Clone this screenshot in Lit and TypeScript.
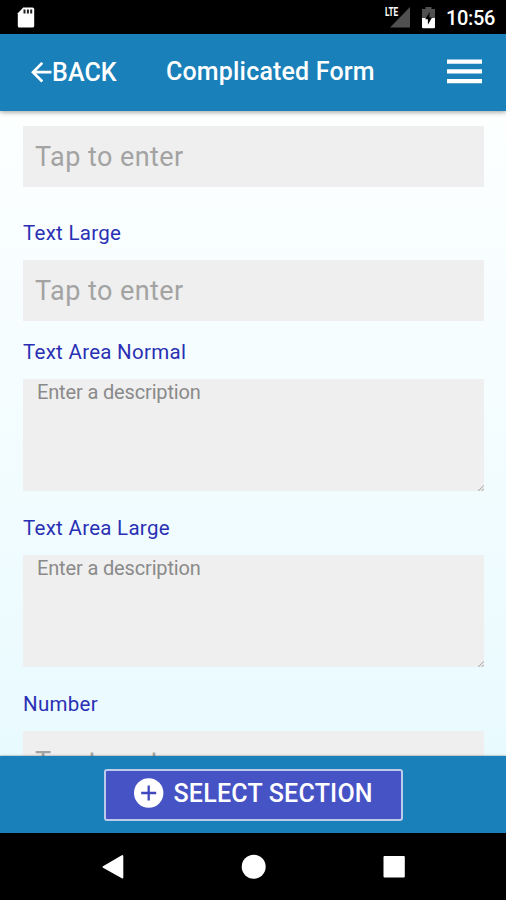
import { LitElement, html, css } from "lit";
import { customElement, property } from "lit/decorators.js";

@customElement("status-bar")
class StatusBar extends LitElement {
  static styles = css`
    :host { display: flex; align-items: flex-start; height: 34px; background: #000; color: #fff; box-sizing: border-box; }
    svg { display: block; flex: none; }
    .sd { margin: 7px 0 0 17px; }
    .spacer { flex: 1; }
    .lte { font: 700 13px/12px Roboto, sans-serif; margin-top: 6px; width: 14px; white-space: nowrap; transform: scaleX(0.63); transform-origin: 0 0; }
    .signal { margin-top: 7px; margin-right: 11px; margin-left: -9px; }
    .battery { margin-top: 7px; margin-right: 10px; }
    .clock { font: 500 20px/24px Roboto, sans-serif; margin-top: 6px; width: 60px; white-space: nowrap; letter-spacing: -0.35px; }
  `;
  render() {
    return html`
      <svg class="sd" width="18" height="21" viewBox="0 0 18 21">
        <path fill="#fff" d="M6.2 0.5H15.5Q17.2 0.5 17.2 2.2V19Q17.2 20.6 15.5 20.6H2.3Q0.8 20.6 0.8 19V6.2Z" />
        <path fill="#222" d="M6.5 2.5h2v4h-2zM9.9 2.5h2v4h-2zM13.2 2.5h2v4h-2z" />
      </svg>
      <div class="spacer"></div>
      <span class="lte">LTE</span>
      <svg class="signal" width="20" height="21" viewBox="0 0 20 21"><path fill="#505050" d="M20 0V20.5H0Z" /></svg>
      <svg class="battery" width="15" height="22" viewBox="0 0 15 22">
        <path fill="#505050" d="M4.5 0H10.5V2H14V12H1V2H4.5Z" />
        <path fill="#fff" d="M1 11H14V20Q14 21.2 12.8 21.2H2.2Q1 21.2 1 20Z" />
        <path fill="#000" d="M8.8 4.8L4.2 12.3H6.9V17.8L11 10.4H8.2Z" />
      </svg>
      <span class="clock">10:56</span>
    `;
  }
}

@customElement("top-bar")
class TopBar extends LitElement {
  static styles = css`
    :host { display: flex; align-items: center; height: 77px; background: #1a80b9; color: #fff; box-sizing: border-box;
      box-shadow: 0 1px 5px rgba(0, 0, 0, 0.4); position: relative; z-index: 1; padding: 0 24px 0 31px; }
    svg { display: block; flex: none; }
    .back { display: flex; align-items: center; font: 500 25px/30px Roboto, sans-serif; width: 135px; white-space: nowrap; letter-spacing: 0.1px; }
    .title { font: 500 25px/30px Roboto, sans-serif; flex: 1; white-space: nowrap; margin-top: -2px; letter-spacing: 0.18px; }
    .menu { margin-top: -3px; }
  `;
  render() {
    return html`
      <div class="back">
        <svg width="21" height="22" viewBox="0 0 21 22">
          <path fill="none" stroke="#fff" stroke-width="2.7" d="M20.5 10.2H2M11.3 0.9L2 10.2L11.3 19.5" />
        </svg>
        <span>BACK</span>
      </div>
      <div class="title">Complicated Form</div>
      <svg class="menu" width="35" height="25" viewBox="0 0 35 25">
        <path fill="#fff" d="M0 0.5h35v4.3H0zM0 10.3h35v4.3H0zM0 20h35v4.3H0z" />
      </svg>
    `;
  }
}

@customElement("form-field")
class FormField extends LitElement {
  @property() label = "";
  @property() kind = "input";
  static styles = css`
    :host { display: block; font-family: Roboto, sans-serif; }
    .label { font-size: 20.5px; line-height: 26px; color: #2a30b4; margin-bottom: 14px; white-space: nowrap; letter-spacing: 0.28px; }
    .box { background: #efefef; position: relative; box-sizing: border-box; white-space: nowrap; }
    .input { height: 61px; padding-left: 12px; font-size: 27px; line-height: 62px; color: #a3a3a3; letter-spacing: 0.44px; }
    .area { height: 112px; padding: 1px 0 0 14px; font-size: 20px; line-height: 25px; color: #8a8a8a; letter-spacing: -0.15px; }
    .grip { position: absolute; right: 0; bottom: 0; display: block; }
  `;
  render() {
    const area = this.kind === "area";
    return html`
      ${this.label ? html`<div class="label">${this.label}</div>` : null}
      <div class="box ${this.kind}">
        ${area ? "Enter a description" : "Tap to enter"}
        ${area
          ? html`<svg class="grip" width="6" height="6" viewBox="0 0 6 6">
              <path stroke="#999" stroke-width="1" d="M0.3 6L6 0.3M3.6 6L6 3.6" />
            </svg>`
          : null}
      </div>
    `;
  }
}

@customElement("app-root")
class AppRoot extends LitElement {
  static styles = css`
    :host { display: flex; flex-direction: column; width: 506px; height: 900px; overflow: hidden; font-family: Roboto, sans-serif; }
    .content { height: 645px; flex: none; overflow: hidden; box-sizing: border-box; padding: 15px 22px 0 23px;
      background: linear-gradient(#fdffff, #e9faff); }
    .gap-xl { margin-top: 33px; }
    .gap-s { margin-top: 18px; }
    .gap-m { margin-top: 24px; }
    .footer { height: 77px; flex: none; background: #1a80b9; display: flex; justify-content: center; align-items: center;
      box-shadow: 0 0 2px rgba(0, 0, 0, 0.5); position: relative; }
    .select { display: flex; align-items: center; box-sizing: border-box; width: 299px; height: 52px; border: 2px solid #bccbec;
      border-radius: 3px; background: #4653c5; color: #fff; padding: 0 0 1px 27px; font: 500 25px/30px Roboto, sans-serif;
      white-space: nowrap; letter-spacing: 0.22px; }
    .plus { display: block; flex: none; margin: -2px 10px 0 1px; }
    .nav { flex: 1; background: #000; }
    .keys { display: block; }
  `;
  render() {
    return html`
      <status-bar></status-bar>
      <top-bar></top-bar>
      <div class="content">
        <form-field></form-field>
        <form-field class="gap-xl" label="Text Large"></form-field>
        <form-field class="gap-s" label="Text Area Normal" kind="area"></form-field>
        <form-field class="gap-m" label="Text Area Large" kind="area"></form-field>
        <form-field class="gap-m" label="Number"></form-field>
      </div>
      <div class="footer">
        <div class="select">
          <svg class="plus" width="30" height="30" viewBox="0 0 30 30">
            <circle cx="14.7" cy="15" r="14.7" fill="#fff" />
            <path stroke="#4048bd" stroke-width="2.3" d="M7.2 15H22.2M14.7 7.5V22.5" />
          </svg>
          <span>SELECT SECTION</span>
        </div>
      </div>
      <div class="nav">
        <svg class="keys" width="506" height="67" viewBox="0 0 506 67">
          <path fill="#fff" stroke="#fff" stroke-width="2" stroke-linejoin="round" d="M122.3 23V44.5L103.5 34Z" />
          <circle cx="253.7" cy="33.7" r="12" fill="#fff" />
          <rect x="383.5" y="23" width="21.3" height="21.5" rx="1" fill="#fff" />
        </svg>
      </div>
    `;
  }
}
